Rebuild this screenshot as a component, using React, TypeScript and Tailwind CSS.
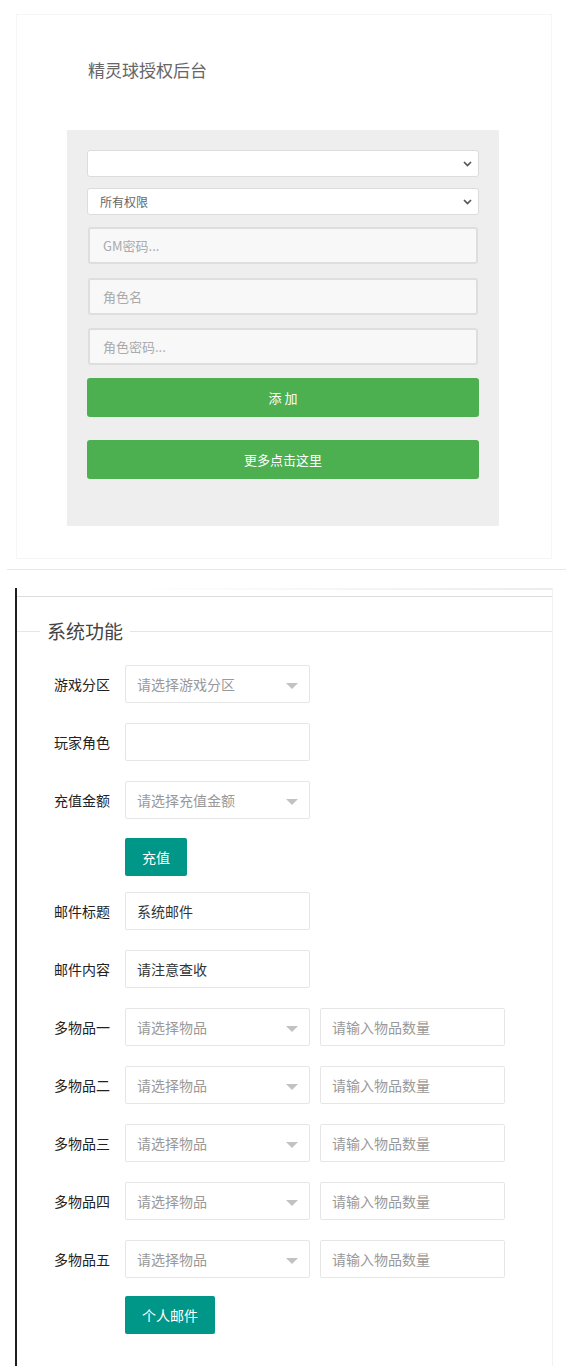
import React from 'react'

function Chevron() {
  return (
    <svg width="9" height="6" viewBox="0 0 9 6" className="shrink-0">
      <path d="M1 1l3.5 3.5L8 1" fill="none" stroke="#555" strokeWidth="1.7" />
    </svg>
  )
}

function Caret() {
  return (
    <span className="w-0 h-0 border-x-[6px] border-x-transparent border-t-[6px] border-t-[#c2c2c2] mt-[3px]" />
  )
}

function Field({ text, muted = true }: { text: string; muted?: boolean }) {
  return (
    <div className={`w-[185px] h-[38px] flex items-center border border-[#e6e6e6] rounded-[2px] bg-white pl-[11px] text-[14px] ${muted ? 'text-[#999]' : 'text-[#333]'}`}>
      {text}
    </div>
  )
}

function SelectField({ text }: { text: string }) {
  return (
    <div className="w-[185px] h-[38px] flex items-center justify-between border border-[#e6e6e6] rounded-[2px] bg-white pl-[11px] pr-[11px] text-[14px] text-[#999]">
      <span>{text}</span>
      <Caret />
    </div>
  )
}

function Row({ label, className = '', children }: { label: string; className?: string; children: React.ReactNode }) {
  return (
    <div className={`flex items-center h-[38px] ${className}`}>
      <div className="w-[108px] pr-[15px] text-right text-[14px] text-[#222]">{label}</div>
      {children}
    </div>
  )
}

const items = ['多物品一', '多物品二', '多物品三', '多物品四', '多物品五']

export default function App() {
  return (
    <div className="w-[566px] min-h-[1366px] bg-white overflow-hidden font-['Noto_Sans_CJK_SC','Noto_Sans',sans-serif]">
      {/* Top screenshot */}
      <div className="ml-[7px] h-[570px] pt-[14px] border-b border-[#e8e8e8]">
        <div className="ml-[9px] w-[536px] h-[545px] border border-[#f5f5f5]">
          <h1 className="pl-[71px] pt-[43px] text-[17px] leading-[24px] text-[#666]">精灵球授权后台</h1>

          <div className="ml-[50px] mt-[48px] w-[432px] h-[396px] bg-[#eeeeee] px-[20px] pt-[20px] flex flex-col">
            <div className="h-[27px] flex items-center justify-end bg-white border border-[#dcdcdc] rounded-[3px] pr-[6px]">
              <Chevron />
            </div>
            <div className="mt-[11px] h-[27px] flex items-center justify-between bg-white border border-[#dcdcdc] rounded-[3px] pl-[12px] pr-[6px] text-[12px] text-[#666]">
              <span>所有权限</span>
              <Chevron />
            </div>
            <div className="mt-[12px] mx-[1px] h-[37px] flex items-center bg-[#f8f8f8] border-2 border-[#dedede] rounded-[3px] pl-[13px] text-[13px] text-[#aaa]">
              GM密码...
            </div>
            <div className="mt-[14px] mx-[1px] h-[37px] flex items-center bg-[#f8f8f8] border-2 border-[#dedede] rounded-[3px] pl-[13px] text-[13px] text-[#aaa]">
              角色名
            </div>
            <div className="mt-[13px] mx-[1px] h-[37px] flex items-center bg-[#f8f8f8] border-2 border-[#dedede] rounded-[3px] pl-[13px] text-[13px] text-[#aaa]">
              角色密码...
            </div>
            <button className="mt-[13px] h-[39px] bg-[#4caf50] rounded-[3px] text-white text-[13px]">添 加</button>
            <button className="mt-[23px] h-[39px] bg-[#4caf50] rounded-[3px] text-white text-[13px]">更多点击这里</button>
          </div>
        </div>
      </div>

      {/* Bottom screenshot */}
      <div className="mt-[18px] ml-[15px] w-[538px] min-h-[778px] border-l-2 border-[#1e1e1e] border-r border-r-[#f2f2f2]">
        <div className="mt-[2px] ml-[113px] h-[2px] bg-gradient-to-r from-white to-[#ececec]" />
        <div className="mt-[6px] h-px bg-[#dddddd]" />

        {/* Fieldset legend */}
        <div className="mt-[22px] flex items-center h-[24px]">
          <div className="w-[23px] h-px bg-[#e6e6e6]" />
          <span className="px-[7px] text-[19px] leading-[24px] text-[#444]">系统功能</span>
          <div className="flex-1 h-px bg-[#e6e6e6]" />
        </div>

        <Row label="游戏分区" className="mt-[22px]">
          <SelectField text="请选择游戏分区" />
        </Row>
        <Row label="玩家角色" className="mt-[20px]">
          <Field text="" />
        </Row>
        <Row label="充值金额" className="mt-[20px]">
          <SelectField text="请选择充值金额" />
        </Row>
        <div className="mt-[19px] pl-[108px]">
          <button className="h-[38px] px-[17px] bg-[#009688] rounded-[2px] text-white text-[14px]">充值</button>
        </div>

        <Row label="邮件标题" className="mt-[16px]">
          <Field text="系统邮件" muted={false} />
        </Row>
        <Row label="邮件内容" className="mt-[20px]">
          <Field text="请注意查收" muted={false} />
        </Row>

        {items.map((label) => (
          <Row key={label} label={label} className="mt-[20px]">
            <SelectField text="请选择物品" />
            <div className="ml-[10px]">
              <Field text="请输入物品数量" />
            </div>
          </Row>
        ))}

        <div className="mt-[18px] pl-[108px]">
          <button className="h-[38px] px-[17px] bg-[#009688] rounded-[2px] text-white text-[14px]">个人邮件</button>
        </div>
      </div>
    </div>
  )
}
